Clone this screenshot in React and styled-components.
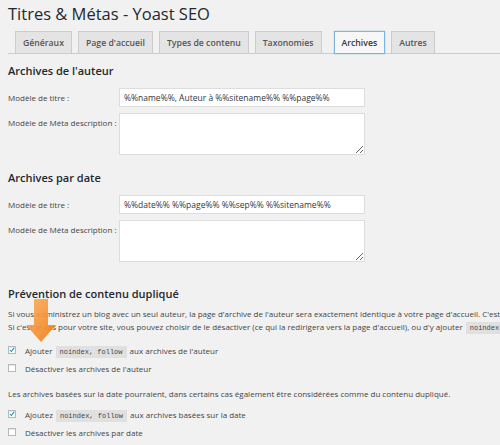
import React from "react";
import styled, { createGlobalStyle } from "styled-components";

const GlobalStyle = createGlobalStyle`
  html, body {
    margin: 0;
    padding: 0;
    background: #f1f1f1;
    overflow: hidden;
  }
  body {
    font-family: "Open Sans", "Liberation Sans", sans-serif;
    color: #444;
  }
`;

const Page = styled.div`
  padding: 0 0 0 8px;
  width: 700px;
`;

const Title = styled.h1`
  margin: 0;
  padding-top: 3px;
  font-size: 16.5px;
  font-weight: 400;
  line-height: 22px;
  color: #23282d;
`;

// Onglets de navigation
const TabBar = styled.nav`
  display: flex;
  align-items: flex-end;
  gap: 6px;
  margin-top: 6px;
  padding-left: 7px;
  border-bottom: 1px solid #ccc;
  width: 485px;
`;

const Tab = styled.a`
  display: flex;
  align-items: center;
  height: 21px;
  padding: 0 7px;
  margin-left: ${(p) => (p.$active ? "6px" : "0")};
  margin-bottom: -1px;
  font-size: 8.7px;
  font-weight: 600;
  color: ${(p) => (p.$active ? "#32373c" : "#555")};
  background: ${(p) => (p.$active ? "#f7f7f7" : "#e4e4e4")};
  border: 1px solid ${(p) => (p.$active ? "#7eb4e0" : "#ccc")};
  box-shadow: ${(p) => (p.$active ? "0 0 1px rgba(30,140,190,.6)" : "none")};
`;

const Section = styled.section`
  position: relative;
  margin-top: ${(p) => p.$top || "0"};
`;

const Heading = styled.h2`
  margin: 0 0 ${(p) => p.$gap || "9px"};
  font-size: 11px;
  font-weight: 600;
  line-height: 16px;
  color: #23282d;
`;

const FormRow = styled.div`
  display: grid;
  grid-template-columns: 111px 246px;
  align-items: start;
  margin-bottom: 6px;
`;

const Label = styled.label`
  font-size: 8px;
  line-height: 19px;
  color: #444;
  white-space: nowrap;
`;

const TextInput = styled.input`
  box-sizing: border-box;
  height: 19px;
  width: 100%;
  margin: 0;
  padding: 0 4px;
  border: 1px solid #ddd;
  background: #fff;
  font-family: "Open Sans", "Liberation Sans", sans-serif;
  font-size: 8.5px;
  color: #32373c;
  outline: none;
`;

const TextArea = styled.textarea`
  box-sizing: border-box;
  display: block;
  height: 42px;
  width: 100%;
  margin: 0;
  border: 1px solid #ddd;
  background: #fff;
  outline: none;
`;

const Text = styled.p`
  margin: ${(p) => p.$margin || "0"};
  font-size: 8px;
  line-height: 13px;
  color: #444;
  white-space: nowrap;
`;

const CheckRow = styled.label`
  display: flex;
  align-items: center;
  gap: 9px;
  height: 18px;
  font-size: 8px;
  color: #444;
  white-space: nowrap;
`;

const Box = styled.span`
  box-sizing: border-box;
  display: inline-flex;
  align-items: center;
  justify-content: center;
  width: 8px;
  height: 8px;
  border: 1px solid #b4b9be;
  background: #fff;
  box-shadow: inset 0 1px 1px rgba(0, 0, 0, 0.1);
`;

const Code = styled.code`
  font-family: "Liberation Mono", "DejaVu Sans Mono", monospace;
  font-size: 7px;
  line-height: 1;
  padding: 2px 4px;
  margin: 0 1px;
  background: rgba(0, 0, 0, 0.07);
  color: #444;
`;

const Checks = styled.div`
  margin: ${(p) => p.$margin || "0"};
`;

const Arrow = styled.svg`
  position: absolute;
  left: 17px;
  top: 13px;
  pointer-events: none;
`;

const Checkbox = ({ checked, children }) => (
  <CheckRow>
    <Box>
      {checked && (
        <svg width="8" height="8" viewBox="0 0 8 8">
          <path d="M1.3 4.2 L3.2 6 L6.8 1.2" fill="none" stroke="#1e8cbe" strokeWidth="1.4" />
        </svg>
      )}
    </Box>
    <span>{children}</span>
  </CheckRow>
);

const tabs = ["Généraux", "Page d'accueil", "Types de contenu", "Taxonomies", "Archives", "Autres"];

const TemplateFields = ({ title }) => (
  <>
    <FormRow>
      <Label>Modèle de titre :</Label>
      <TextInput readOnly value={title} />
    </FormRow>
    <FormRow>
      <Label>Modèle de Méta description :</Label>
      <TextArea />
    </FormRow>
  </>
);

export default function App() {
  return (
    <Page>
      <GlobalStyle />
      <Title>Titres &amp; Métas - Yoast SEO</Title>
      <TabBar>
        {tabs.map((t) => (
          <Tab key={t} $active={t === "Archives"}>
            {t}
          </Tab>
        ))}
      </TabBar>

      <Section $top="9px">
        <Heading>Archives de l'auteur</Heading>
        <TemplateFields title="%%name%%, Auteur à %%sitename%% %%page%%" />
      </Section>

      <Section $top="15px">
        <Heading>Archives par date</Heading>
        <TemplateFields title="%%date%% %%page%% %%sep%% %%sitename%%" />
      </Section>

      <Section $top="24px">
        <Heading $gap="5px">Prévention de contenu dupliqué</Heading>
        <Text>
          Si vous administrez un blog avec un seul auteur, la page d'archive de l'auteur sera exactement identique à
          votre page d'accueil. C'est
        </Text>
        <Text>
          Si c'est le cas pour votre site, vous pouvez choisir de le désactiver (ce qui la redirigera vers la page
          d'accueil), ou d'y ajouter <Code>noindex</Code>
        </Text>
        <Checks $margin="8px 0 0">
          <Checkbox checked>
            Ajouter <Code>noindex, follow</Code> aux archives de l'auteur
          </Checkbox>
          <Checkbox>Désactiver les archives de l'auteur</Checkbox>
        </Checks>
        <Text $margin="10px 0 0">
          Les archives basées sur la date pourraient, dans certains cas également être considérées comme du contenu
          dupliqué.
        </Text>
        <Checks $margin="5px 0 0">
          <Checkbox checked>
            Ajoutez <Code>noindex, follow</Code> aux archives basées sur la date
          </Checkbox>
          <Checkbox>Désactiver les archives par date</Checkbox>
        </Checks>

        <Arrow width="32" height="44" viewBox="0 0 32 44">
          <defs>
            <linearGradient id="arrowFill" x1="0" y1="0" x2="1" y2="1">
              <stop offset="0" stopColor="#fbb060" />
              <stop offset="1" stopColor="#f07c14" />
            </linearGradient>
          </defs>
          <path d="M9 0 H23 V26 H31 L16 43 L1 26 H9 Z" fill="url(#arrowFill)" opacity="0.92" />
        </Arrow>
      </Section>
    </Page>
  );
}
